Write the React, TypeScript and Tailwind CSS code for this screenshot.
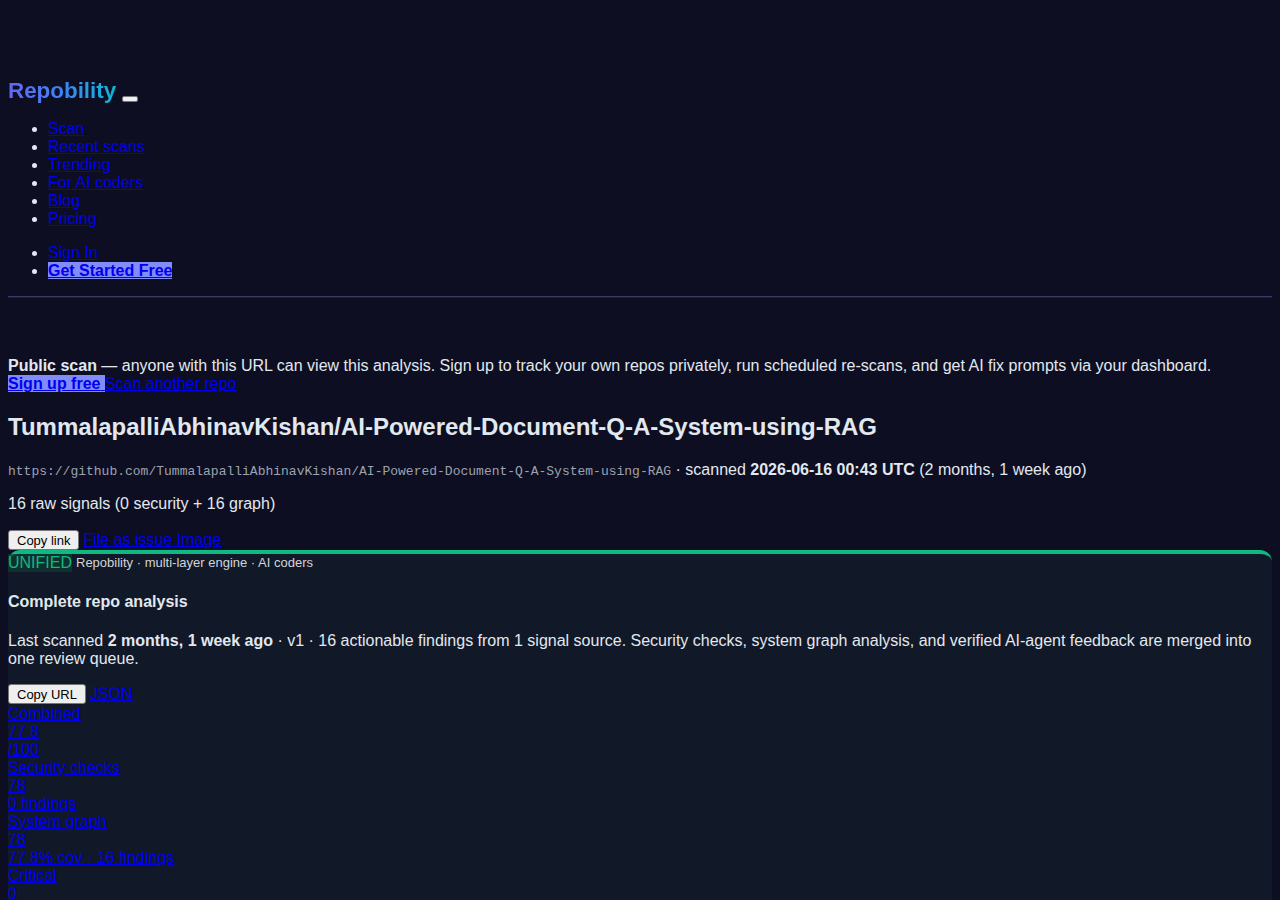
import React from 'react'

const navLinks = ['Scan', 'Recent scans', 'Trending', 'For AI coders', 'Blog', 'Pricing']

const scoreLinks = [
  'Combined',
  '77.8',
  '/100',
  'Security checks',
  '78',
  '0 findings',
  'System graph',
  '78',
  '77.8% cov · 16 findings',
  'Critical',
  '0',
]

const Btn = ({ children }: { children: React.ReactNode }) => (
  <button className="h-5 px-2 bg-[#efefef] text-black text-[13px] leading-none border border-[#767676] rounded-[3px] align-middle">
    {children}
  </button>
)

const App = () => {
  return (
    <div
      className="min-h-[900px] bg-[#0d0e21] text-[#e2e8f0] px-2 pt-[78px] text-base leading-[18px]"
      style={{ fontFamily: '"Liberation Sans", Arial, sans-serif' }}
    >
      <header>
        <div className="flex items-end h-[26px]">
          <span className="text-[22.4px] leading-[26px] font-bold bg-gradient-to-r from-[#6366f1] via-[#3b82f6] to-[#06b6d4] bg-clip-text text-transparent">
            Repobility
          </span>
          <button className="ml-[6px] mb-[2px] w-4 h-[6px] bg-[#efefef] border border-[#767676] rounded-[2px]" />
        </div>
        <ul className="list-disc pl-10 my-4">
          {navLinks.map((l) => (
            <li key={l}>
              <a className="text-[#0000ee] underline" href="#">
                {l}
              </a>
            </li>
          ))}
        </ul>
        <ul className="list-disc pl-10 my-4">
          <li>
            <a className="text-[#0000ee] underline" href="#">
              Sign In
            </a>
          </li>
          <li>
            <a className="text-[#0000ee] underline font-bold bg-[#818cf8]" href="#">
              Get Started Free
            </a>
          </li>
        </ul>
        <hr className="border-0 border-t border-t-[#3a3b63] border-b border-b-[#1b1c33]" />
      </header>

      <main className="pt-[59px]">
        <p>
          <b>Public scan</b> — anyone with this URL can view this analysis. Sign up to track your own repos
          privately, run scheduled re-scans, and get AI fix prompts via your dashboard.
          <br />
          <a className="text-[#0000ee] underline font-bold bg-[#818cf8]" href="#">
            Sign up free{' '}
          </a>
          <a className="text-[#0000ee] underline" href="#">
            Scan another repo
          </a>
        </p>

        <h1 className="text-2xl leading-7 font-bold mt-5">
          TummalapalliAbhinavKishan/AI-Powered-Document-Q-A-System-using-RAG
        </h1>

        <p className="mt-5">
          <code
            className="text-[13px] text-[#9ca3af]"
            style={{ fontFamily: '"Liberation Mono", "Courier New", monospace' }}
          >
            https://github.com/TummalapalliAbhinavKishan/AI-Powered-Document-Q-A-System-using-RAG
          </code>{' '}
          · scanned <b>2026-06-16 00:43 UTC</b> (2 months, 1 week ago)
        </p>

        <p className="mt-[14px]">16 raw signals (0 security + 16 graph)</p>

        <div className="mt-[17px] flex items-center gap-1 h-5">
          <Btn>Copy link</Btn>
          <span>
            <a className="text-[#0000ee] underline" href="#">
              File as issue{' '}
            </a>
            <a className="text-[#0000ee] underline" href="#">
              Image
            </a>
          </span>
        </div>

        <section className="bg-[#111827] border-t-4 border-[#10b981] rounded-t-xl">
          <div className="flex items-center gap-1">
            <span className="text-[#10b981] bg-[#0f3a33]/70">UNIFIED</span>
            <span className="text-[13px] text-[#d1d5db]">Repobility · multi-layer engine · AI coders</span>
          </div>
          <h3 className="font-bold mt-[21px]">Complete repo analysis</h3>
          <p className="mt-[21px]">
            Last scanned <b>2 months, 1 week ago</b> · v1 · 16 actionable findings from 1 signal source. Security
            checks, system graph analysis, and verified AI-agent feedback are merged into one review queue.
          </p>
          <div className="mt-4 flex items-center gap-1 h-5">
            <Btn>Copy URL</Btn>
            <a className="text-[#0000ee] underline" href="#">
              JSON
            </a>
          </div>
          <div className="mt-[1px] flex flex-col items-start">
            {scoreLinks.map((l, i) => (
              <a key={i} className="text-[#0000ee] underline" href="#">
                {l}
              </a>
            ))}
          </div>
        </section>
      </main>
    </div>
  )
}

export default App
